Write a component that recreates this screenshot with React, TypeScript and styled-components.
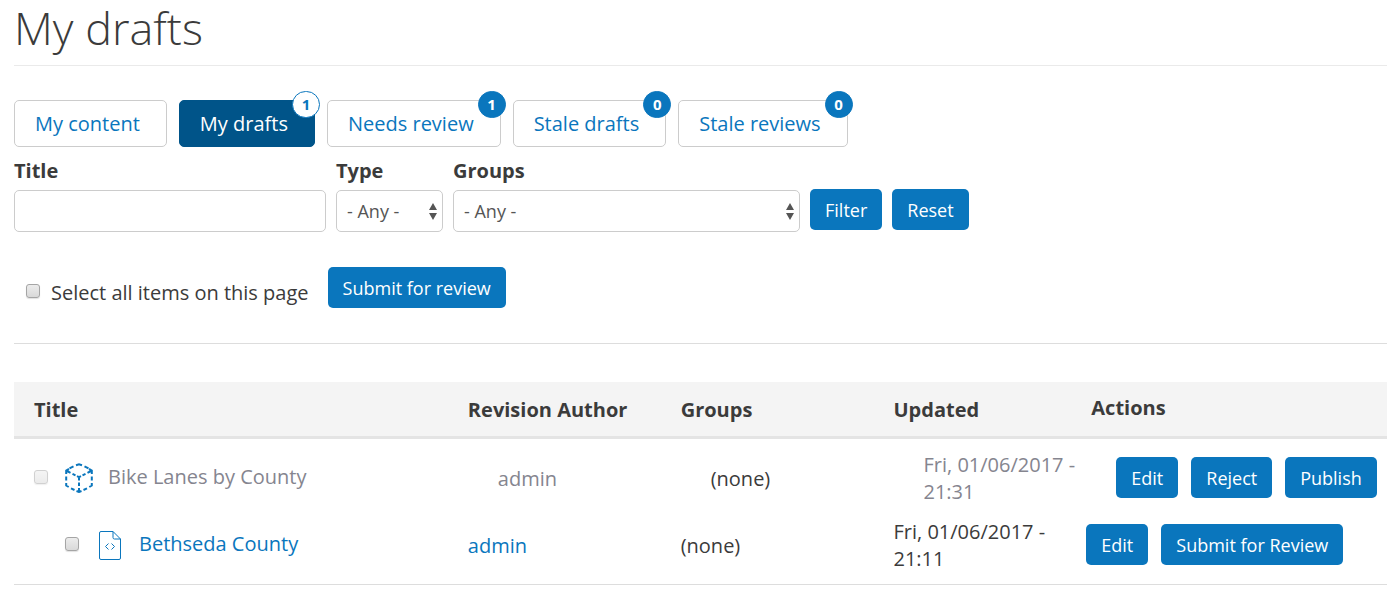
import React from "react";
import styled, { createGlobalStyle, css } from "styled-components";

const blue = "#0a76bd";
const navy = "#005489";
const ink = "#3b3b3b";
const muted = "#85858f";
const line = "#cccccc";

const GlobalStyle = createGlobalStyle`
  *, *::before, *::after { box-sizing: border-box; }
  body {
    margin: 0;
    background: #fff;
    color: ${ink};
    font-family: "Open Sans", "Liberation Sans", sans-serif;
    font-size: 20px;
    line-height: 27px;
  }
  button, input, select { font-family: inherit; }
`;

const Page = styled.main`
  padding-left: 14px;
`;

const Heading = styled.h1`
  margin: 0;
  height: 66px;
  border-bottom: 1px solid #eaeaea;
  font-size: 45px;
  font-weight: 300;
  line-height: 56px;
`;

const Tabs = styled.nav`
  display: flex;
  flex-wrap: wrap;
  gap: 12px;
  margin-top: 34px;
`;

const Tab = styled.a<{ $active?: boolean }>`
  position: relative;
  height: 47px;
  padding: 9px 26px 9px 20px;
  border: 1px solid ${(p) => (p.$active ? navy : line)};
  border-radius: 5px;
  background: ${(p) => (p.$active ? navy : "#fff")};
  color: ${(p) => (p.$active ? "#fff" : blue)};
  text-decoration: none;
`;

const Badge = styled.span<{ $active?: boolean }>`
  position: absolute;
  top: -10px;
  right: -6px;
  width: 28px;
  height: 27px;
  border: 1px solid ${blue};
  border-radius: 14px;
  background: ${(p) => (p.$active ? "#fff" : blue)};
  color: ${(p) => (p.$active ? blue : "#fff")};
  font-size: 15px;
  font-weight: 700;
  line-height: 25px;
  text-align: center;
`;

const Filters = styled.form`
  display: flex;
  flex-wrap: wrap;
  align-items: flex-end;
  gap: 10px;
  margin-top: 10px;
`;

const Field = styled.div<{ $width: number }>`
  display: flex;
  flex-direction: column;
  gap: 6px;
  width: ${(p) => p.$width}px;
`;

const FieldLabel = styled.label`
  font-weight: 700;
`;

const control = css`
  width: 100%;
  height: 42px;
  padding: 0 10px;
  border: 1px solid ${line};
  border-radius: 5px;
  background: #fff;
  color: #555;
  font-size: 18px;
`;

const TextInput = styled.input`
  ${control}
`;

const Select = styled.select`
  ${control}
  appearance: none;
`;

const SelectWrap = styled.div`
  position: relative;
`;

const Arrows = styled.svg`
  position: absolute;
  top: 13px;
  right: 5px;
  pointer-events: none;
`;

const Button = styled.button`
  height: 41px;
  padding: 2px 15px 0;
  border: 0;
  border-radius: 5px;
  background: ${blue};
  color: #fff;
  font-size: 18px;
  line-height: 25px;
  white-space: nowrap;
`;

const FilterButtons = styled.div`
  display: flex;
  gap: 10px;
  padding-bottom: 2px;
`;

const Bulk = styled.div`
  display: flex;
  align-items: flex-end;
  gap: 19px;
  margin-top: 35px;
  padding: 0 0 35px 12px;
  border-bottom: 1px solid #ddd;
`;

const CheckLabel = styled.label`
  display: flex;
  align-items: center;
  gap: 11px;
  padding-bottom: 2px;
`;

const Checkbox = styled.input`
  appearance: none;
  flex: none;
  width: 14px;
  height: 14px;
  margin: 0 0 3px;
  border: 1px solid #a5a5a5;
  border-radius: 3px;
  background: linear-gradient(#ececec, #d9d9d9);
  box-shadow: 0 1px 1px rgba(0, 0, 0, 0.12);
  &:disabled { opacity: 0.5; }
`;

const Table = styled.table`
  width: 100%;
  margin-top: 38px;
  border-collapse: separate;
  border-spacing: 0;
  table-layout: fixed;
  border-bottom: 1px solid #ddd;
`;

const Th = styled.th<{ $width: string; $actions?: boolean }>`
  width: ${(p) => p.$width};
  height: 57px;
  padding: ${(p) => (p.$actions ? "0 0 4px 5px" : "0 0 0 20px")};
  border-bottom: 3px solid #e4e4e4;
  background: #f4f4f4;
  text-align: left;
  font-weight: 700;
`;

const Row = styled.tr<{ $indent?: boolean }>`
  td { padding: 6px 0 12px ${(p) => (p.$indent ? 50 : 20)}px; }
  td:first-child { padding-left: ${(p) => (p.$indent ? 20 : 51)}px; }
  td:last-child { padding-left: ${(p) => (p.$indent ? 30 : 0)}px; }
  ${(p) => p.$indent && css`td { padding-top: 12px; padding-bottom: 7px; }`}
`;

const Cell = styled.td<{ $muted?: boolean }>`
  height: 72px;
  color: ${(p) => (p.$muted ? muted : ink)};
`;

const TitleGroup = styled.div`
  display: flex;
  align-items: center;
`;

const IconBox = styled.span`
  display: flex;
  justify-content: center;
  width: 28px;
  margin: 0 15px 0 17px;
`;

const Link = styled.a<{ $muted?: boolean }>`
  color: ${(p) => (p.$muted ? muted : blue)};
  text-decoration: none;
  padding-bottom: 4px;
`;

const Actions = styled.div`
  display: flex;
  gap: 13px;
  padding-bottom: 2px;
`;

const UpDown = () => (
  <Arrows width="10" height="17" viewBox="0 0 10 17" aria-hidden="true">
    <path d="M5 0 9 7H1ZM5 17 1 10h8Z" fill="#555" />
  </Arrows>
);

const CubeIcon = () => (
  <svg width="28" height="30" viewBox="0 0 28 30" fill="none" stroke={blue} strokeWidth="2" aria-hidden="true">
    <path d="M11 2.200 14 1.200l3 1M19.500 3.400l4 2M8.500 3.400l-4 2M1.200 11V7.500L4 6M26.800 11V7.500L24 6M1.200 13.500v4M26.800 13.500v4M1.200 20v2.500l2.500 1.500M26.800 20v2.500L24.300 24M6 25.300l3.500 1.700M22 25.300 18.500 27M11.500 28 14 29l2.500-1M2 8l3.500 1.800M7.500 10.900l3 1.500M26 8l-3.500 1.800M20.500 10.900l-3 1.500M12 13.200l2 1 2-1M14 14v3.500M14 19.500v3.500M14 25v4" />
  </svg>
);

const CodeFileIcon = () => (
  <svg width="22" height="29" viewBox="0 0 22 29" fill="none" stroke={blue} aria-hidden="true">
    <path d="M14 .5H2A1.500 1.500 0 0 0 .5 2v25A1.500 1.500 0 0 0 2 28.500h18a1.500 1.500 0 0 0 1.500-1.500V8ZM14 .5V6.500A1.500 1.500 0 0 0 15.500 8h6" />
    <path d="m9.500 12.500-3 3 3 3M12.500 12.500l3 3-3 3" />
  </svg>
);

const tabs = [
  { label: "My content" },
  { label: "My drafts", count: 1, active: true },
  { label: "Needs review", count: 1 },
  { label: "Stale drafts", count: 0 },
  { label: "Stale reviews", count: 0 },
];

const rows = [
  {
    title: "Bike Lanes by County",
    updated: "Fri, 01/06/2017 - 21:31",
    actions: ["Edit", "Reject", "Publish"],
    icon: <CubeIcon />,
    locked: true,
  },
  {
    title: "Bethseda County",
    updated: "Fri, 01/06/2017 - 21:11",
    actions: ["Edit", "Submit for Review"],
    icon: <CodeFileIcon />,
    locked: false,
  },
];

export default function App() {
  return (
    <>
      <GlobalStyle />
      <Page>
        <Heading>My drafts</Heading>
        <Tabs>
          {tabs.map((t) => (
            <Tab key={t.label} href="#" $active={t.active}>
              {t.label}
              {t.count !== undefined && <Badge $active={t.active}>{t.count}</Badge>}
            </Tab>
          ))}
        </Tabs>

        <Filters onSubmit={(e) => e.preventDefault()}>
          <Field $width={312}>
            <FieldLabel htmlFor="title">Title</FieldLabel>
            <TextInput id="title" type="text" />
          </Field>
          <Field $width={107}>
            <FieldLabel htmlFor="type">Type</FieldLabel>
            <SelectWrap>
              <Select id="type"><option>- Any -</option></Select>
              <UpDown />
            </SelectWrap>
          </Field>
          <Field $width={347}>
            <FieldLabel htmlFor="groups">Groups</FieldLabel>
            <SelectWrap>
              <Select id="groups"><option>- Any -</option></Select>
              <UpDown />
            </SelectWrap>
          </Field>
          <FilterButtons>
            <Button type="submit">Filter</Button>
            <Button type="reset">Reset</Button>
          </FilterButtons>
        </Filters>

        <Bulk>
          <CheckLabel htmlFor="select-all">
            <Checkbox id="select-all" type="checkbox" />
            Select all items on this page
          </CheckLabel>
          <Button type="button">Submit for review</Button>
        </Bulk>

        <Table>
          <thead>
            <tr>
              <Th $width="31.6%">Title</Th>
              <Th $width="15.5%">Revision Author</Th>
              <Th $width="15.5%">Groups</Th>
              <Th $width="15.5%">Updated</Th>
              <Th $width="21.9%" $actions>Actions</Th>
            </tr>
          </thead>
          <tbody>
            {rows.map((r) => (
              <Row key={r.title} $indent={r.locked}>
                <Cell>
                  <TitleGroup>
                    <Checkbox type="checkbox" aria-label={r.title} disabled={r.locked} />
                    <IconBox>{r.icon}</IconBox>
                    <Link href="#" $muted={r.locked}>{r.title}</Link>
                  </TitleGroup>
                </Cell>
                <Cell><Link href="#" $muted={r.locked}>admin</Link></Cell>
                <Cell>(none)</Cell>
                <Cell $muted={r.locked}>{r.updated}</Cell>
                <Cell>
                  <Actions>
                    {r.actions.map((a) => <Button key={a} type="button">{a}</Button>)}
                  </Actions>
                </Cell>
              </Row>
            ))}
          </tbody>
        </Table>
      </Page>
    </>
  );
}
